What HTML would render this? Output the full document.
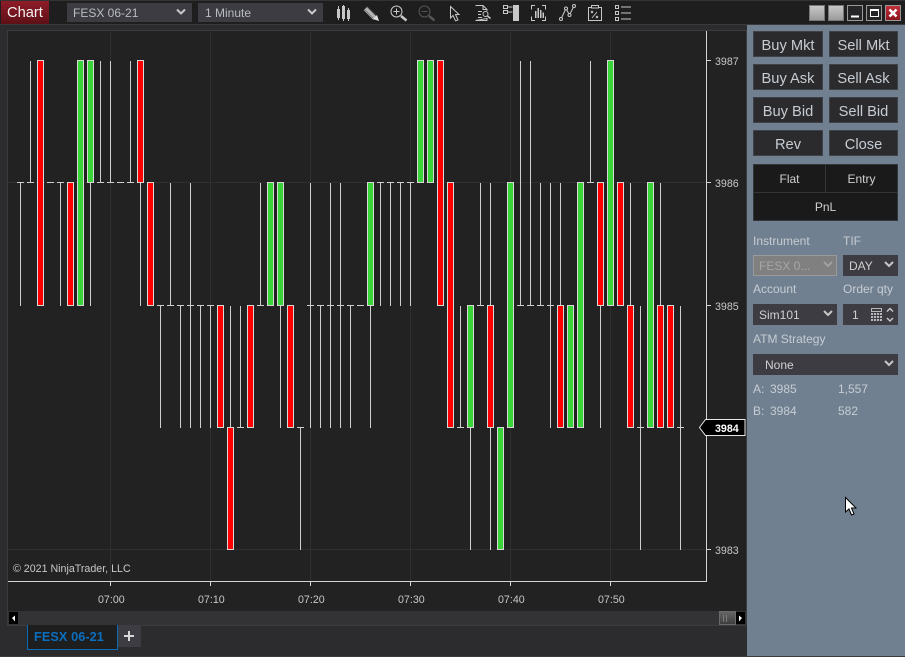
<!DOCTYPE html>
<html>
<head>
<meta charset="utf-8">
<style>
html,body{margin:0;padding:0;background:#2c2c2f;}
body{position:relative;width:905px;height:657px;overflow:hidden;font-family:"Liberation Sans",Arial,sans-serif;}
div{position:absolute;box-sizing:border-box;}
.t{white-space:nowrap;line-height:14px;height:14px;}
.ax{font-size:10.67px;color:#c8c8c8;}
.sel{background:#3c3c42;}
.btn{background:#2b2b2e;border:1px solid #3f4347;color:#c6ccd2;font-size:14.67px;text-align:center;line-height:28px;white-space:nowrap;}
.lb{font-size:12px;color:#c6ccd3;}
.dk{font-size:12px;color:#d0d0d0;text-align:center;line-height:14px;}
svg{position:absolute;left:0;top:0;}
</style>
</head>
<body>
<!-- title bar -->
<div style="left:0;top:0;width:905px;height:24px;background:#1e1e1f;border-top:1px solid #333;"></div>
<div style="left:0;top:24px;width:905px;height:1px;background:#3a3a3d;"></div>
<div style="left:1px;top:1px;width:48px;height:23px;background:linear-gradient(#8e1c28,#5e1016);"></div>
<div class="t" style="left:7px;top:5px;font-size:14.67px;color:#f2f2f2;line-height:16px;height:16px;">Chart</div>
<div class="sel" style="left:67px;top:3px;width:125px;height:19px;"></div>
<div class="t" style="left:73px;top:6px;font-size:12px;color:#b9bcc0;">FESX 06-21</div>
<div class="sel" style="left:198px;top:3px;width:125px;height:19px;"></div>
<div class="t" style="left:205px;top:6px;font-size:12px;color:#b9bcc0;">1 Minute</div>

<!-- chart frame -->
<div style="left:7px;top:30px;width:740px;height:596px;background:#222222;border:1px solid #3c3c3f;"></div>

<svg width="905" height="657" viewBox="0 0 905 657" shape-rendering="crispEdges">
 <!-- grid -->
 <path d="M110.5 32V581M210.5 32V581M310.5 32V581M410.5 32V581M510.5 32V581M610.5 32V581M8 182.5H706M8 549.5H706" stroke="#303030" fill="none"/>
 <!-- wicks and ticks -->
 <path stroke="#cfcfcf" fill="none" d="
 M20.5 183V306M17 182.5h7
 M30.5 61V183M27 182.5h7
 M47 182.5h7
 M60.5 183V306M57 182.5h7
 M90.5 183V306
 M100.5 61V183M97 182.5h7
 M110.5 61V183M107 182.5h7
 M117 182.5h7
 M130.5 61V183M127 182.5h7
 M140.5 183V306
 M160.5 306V428M157 305.5h7
 M170.5 183V306M167 305.5h7
 M180.5 306V428M177 305.5h7
 M190.5 183V428M187 305.5h7
 M200.5 306V428M197 305.5h7
 M210.5 306V428M207 305.5h7
 M230.5 306V428
 M240.5 306V428M237 427.5h7
 M260.5 183V306M257 305.5h7
 M280.5 306V428
 M300.5 428V550M297 427.5h7
 M310.5 183V428M307 305.5h7
 M320.5 306V428M317 305.5h7
 M330.5 183V428M327 305.5h7
 M340.5 183V428M337 305.5h7
 M350.5 306V428M347 305.5h7
 M357 305.5h7
 M370.5 306V428
 M380.5 183V306M377 182.5h7
 M390.5 183V306M387 182.5h7
 M400.5 183V306M397 182.5h7
 M410.5 183V306M407 182.5h7
 M460.5 306V428M457 427.5h7
 M470.5 428V550
 M480.5 183V306M477 305.5h7
 M490.5 183V306M490.5 428V550
 M520.5 61V306M517 305.5h7
 M530.5 61V306M527 305.5h7
 M540.5 183V306M537 305.5h7
 M550.5 183V428M547 305.5h7
 M560.5 183V306
 M590.5 61V183M587 182.5h7
 M600.5 306V428
 M630.5 183V306
 M640.5 306V550M637 427.5h7
 M660.5 183V306
 M680.5 306V550M677 427.5h7"/>
 <!-- red bodies -->
 <g fill="#ff0000" stroke="#d8d8d8">
  <rect x="37.5" y="60.5" width="6" height="245"/>
  <rect x="67.5" y="182.5" width="6" height="123"/>
  <rect x="137.5" y="60.5" width="6" height="122"/>
  <rect x="147.5" y="182.5" width="6" height="123"/>
  <rect x="217.5" y="305.5" width="6" height="122"/>
  <rect x="227.5" y="427.5" width="6" height="122"/>
  <rect x="247.5" y="305.5" width="6" height="122"/>
  <rect x="287.5" y="305.5" width="6" height="122"/>
  <rect x="437.5" y="60.5" width="6" height="245"/>
  <rect x="447.5" y="182.5" width="6" height="245"/>
  <rect x="487.5" y="305.5" width="6" height="122"/>
  <rect x="557.5" y="305.5" width="6" height="122"/>
  <rect x="597.5" y="182.5" width="6" height="123"/>
  <rect x="617.5" y="182.5" width="6" height="123"/>
  <rect x="627.5" y="305.5" width="6" height="122"/>
  <rect x="657.5" y="305.5" width="6" height="122"/>
  <rect x="667.5" y="305.5" width="6" height="122"/>
 </g>
 <!-- green bodies -->
 <g fill="#38d438" stroke="#d8d8d8">
  <rect x="77.5" y="60.5" width="6" height="245"/>
  <rect x="87.5" y="60.5" width="6" height="122"/>
  <rect x="267.5" y="182.5" width="6" height="123"/>
  <rect x="277.5" y="182.5" width="6" height="123"/>
  <rect x="367.5" y="182.5" width="6" height="123"/>
  <rect x="417.5" y="60.5" width="6" height="122"/>
  <rect x="427.5" y="60.5" width="6" height="122"/>
  <rect x="467.5" y="305.5" width="6" height="122"/>
  <rect x="497.5" y="427.5" width="6" height="122"/>
  <rect x="507.5" y="182.5" width="6" height="245"/>
  <rect x="567.5" y="305.5" width="6" height="122"/>
  <rect x="577.5" y="182.5" width="6" height="245"/>
  <rect x="607.5" y="60.5" width="6" height="245"/>
  <rect x="647.5" y="182.5" width="6" height="245"/>
 </g>
 <!-- axes -->
 <path stroke="#d4d4d4" fill="none" d="M706.5 31V582M8 581.5H707M707 60.5h4M707 182.5h4M707 305.5h4M707 549.5h4M110.5 582v4M210.5 582v4M310.5 582v4M410.5 582v4M510.5 582v4M610.5 582v4"/>
 <!-- scrollbar -->
 <rect x="8" y="611" width="738" height="14" fill="#333335"/>
 <rect x="9" y="612" width="9" height="12" fill="#000"/>
 <rect x="736" y="612" width="9" height="12" fill="#000"/>
</svg>

<svg width="905" height="657" viewBox="0 0 905 657">
 <path d="M12 618l3-2.500v6z" fill="#fff"/>
 <path d="M742 618l-3-2.500v6z" fill="#fff"/>
 <defs><linearGradient id="th" x1="0" y1="0" x2="0" y2="1"><stop offset="0" stop-color="#666"/><stop offset="1" stop-color="#3c3c3c"/></linearGradient>
 <linearGradient id="wb" x1="0" y1="0" x2="0" y2="1"><stop offset="0" stop-color="#c8c8c8"/><stop offset="1" stop-color="#9a9a9a"/></linearGradient>
 <linearGradient id="wr" x1="0" y1="0" x2="0" y2="1"><stop offset="0" stop-color="#c4303a"/><stop offset="1" stop-color="#8a141c"/></linearGradient></defs>
 <rect x="719.500" y="611.500" width="16" height="13" fill="url(#th)" stroke="#6a6a6a"/>
 <path d="M723.500 615v7M726.500 615v7" stroke="#7a7a7a"/>
 <!-- price marker -->
 <path d="M699.500 427.500L705.500 419.500H745V435.500H705.500Z" fill="#000" stroke="#e8e8e8"/>
 <!-- top dropdown chevrons -->
 <g fill="none" stroke="#c8c8c8" stroke-width="2">
  <path d="M177 9.500l4 4 4-4"/><path d="M308 9.500l4 4 4-4"/>
 </g>
 <!-- toolbar icons -->
 <g fill="#c8c8c8">
  <rect x="337" y="9" width="3" height="9"/><rect x="338" y="6" width="1" height="14"/>
  <rect x="342" y="6" width="3" height="13"/><rect x="343" y="5" width="1" height="16"/>
  <rect x="347" y="10" width="3" height="9"/><rect x="348" y="8" width="1" height="13"/>
 </g>
 <path d="M365.500 8.500L375 18" stroke="#b5b5b5" stroke-width="5" fill="none"/>
 <path d="M366.500 6.500L377 17M364 9L374.500 19.500" stroke="#666" stroke-width=".7" fill="none"/>
 <path d="M379 21l-6-2 4-4z" fill="#e0e0e0"/>
 <g fill="none" stroke="#c8c8c8">
  <circle cx="396.500" cy="11.500" r="5.500"/>
  <path d="M393.500 11.500h6M396.500 8.500v6"/>
  <path d="M401 16l5.500 4.500" stroke-width="2.500"/>
 </g>
 <g fill="none" stroke="#555">
  <circle cx="424.500" cy="11.500" r="5.500"/>
  <path d="M421.500 11.500h6"/>
  <path d="M429 16l5.500 4.500" stroke-width="2.500"/>
 </g>
 <path d="M450.500 6.500L459 14.500H455.500L458 20L455.500 20.800L453 15.500L450.500 18Z" fill="#1e1e1f" stroke="#c8c8c8"/>
 <g fill="none" stroke="#c8c8c8">
  <path d="M475.500 5.500H483L487 9.500V11M487 18.500V20.500H475.500Z"/>
  <path d="M483 5.500V9.500H487M478 11.500h4M478 14.500h3M478 17.500h4"/>
  <circle cx="485.500" cy="14" r="2.500"/>
  <path d="M487.500 16l3 2.500" stroke-width="1.500"/>
 </g>
 <g fill="none" stroke="#c8c8c8">
  <rect x="503.500" y="5.500" width="4" height="3"/><rect x="503.500" y="10.500" width="4" height="3"/>
  <path d="M507.500 7h5M507.500 12h5"/>
 </g>
 <rect x="513" y="5" width="6" height="16" fill="#c8c8c8"/>
 <g fill="none" stroke="#c8c8c8">
  <path d="M535 5.500h-3.500v4M542 5.500h3.500v4M535 20.500h-3.500v-4M542 20.500h3.500v-4"/>
 </g>
 <g fill="#c8c8c8"><rect x="535" y="11" width="1.500" height="7"/><rect x="537.500" y="8" width="1.500" height="10"/><rect x="540" y="10" width="1.500" height="8"/><rect x="542.500" y="12.500" width="1.500" height="5.500"/></g>
 <g fill="#1e1e1f" stroke="#c8c8c8">
  <path d="M561 19L566 8.500L569.500 15L574 6" fill="none"/>
  <circle cx="561" cy="19" r="1.500"/><circle cx="566" cy="8.500" r="1.500"/><circle cx="569.500" cy="15" r="1.500"/><circle cx="574" cy="6" r="1.500"/>
 </g>
 <g fill="none" stroke="#c8c8c8">
  <path d="M591 7.500h-2.500v13h13v-13H599"/>
  <rect x="591.500" y="5.500" width="7" height="2.500"/>
  <path d="M591 11l2 2M593 11l-2 2M596 16l2 2M598 16l-2 2M592 18l5-6" stroke-width=".9"/>
 </g>
 <g fill="none" stroke="#c8c8c8">
  <rect x="615.500" y="5.500" width="3" height="3"/><rect x="615.500" y="11.500" width="3" height="3"/><rect x="615.500" y="17.500" width="3" height="3"/>
  <path d="M621 7h10M621 13h10M621 19h10"/>
 </g>
 <!-- window controls -->
 <rect x="809.500" y="5.500" width="15" height="15" fill="url(#wb)" stroke="#777"/>
 <rect x="828.500" y="5.500" width="15" height="15" fill="url(#wb)" stroke="#777"/>
 <rect x="847.500" y="5.500" width="15" height="15" fill="#262628" stroke="#9a9a9a"/>
 <path d="M851 16.500h8" stroke="#fff" stroke-width="2"/>
 <rect x="866.500" y="5.500" width="15" height="15" fill="#262628" stroke="#9a9a9a"/>
 <rect x="870.500" y="9.500" width="8" height="7" fill="none" stroke="#fff"/><path d="M870 10h9" stroke="#fff" stroke-width="2"/>
 <rect x="885.500" y="5.500" width="15" height="15" fill="url(#wr)" stroke="#9a9a9a"/>
 <path d="M889.500 9.500l7 7M896.500 9.500l-7 7" stroke="#fff" stroke-width="2.500"/>
</svg>

<!-- axis labels -->
<div class="t ax" style="left:715px;top:55px;">3987</div>
<div class="t ax" style="left:715px;top:177px;">3986</div>
<div class="t ax" style="left:715px;top:300px;">3985</div>
<div class="t ax" style="left:715px;top:544px;">3983</div>
<div class="t" style="left:715px;top:422px;font-size:10.67px;font-weight:bold;color:#fff;">3984</div>
<div class="t ax" style="left:98px;top:593px;">07:00</div>
<div class="t ax" style="left:198px;top:593px;">07:10</div>
<div class="t ax" style="left:298px;top:593px;">07:20</div>
<div class="t ax" style="left:398px;top:593px;">07:30</div>
<div class="t ax" style="left:498px;top:593px;">07:40</div>
<div class="t ax" style="left:598px;top:593px;">07:50</div>
<div class="t ax" style="left:13px;top:562px;">© 2021 NinjaTrader, LLC</div>

<!-- bottom tab -->
<div style="left:27px;top:625px;width:91px;height:25px;background:#1e1e1f;border:1px solid #0a6ab4;border-top:none;"></div>
<div class="t" style="left:34px;top:630px;font-size:12.67px;font-weight:bold;color:#0b6fc0;letter-spacing:.1px;">FESX 06-21</div>
<div style="left:118px;top:625px;width:23px;height:22px;background:#3c3c42;"></div>
<div style="left:124px;top:635px;width:10px;height:2px;background:#d8d8d8;"></div>
<div style="left:128px;top:631px;width:2px;height:10px;background:#d8d8d8;"></div>

<!-- sidebar -->
<div style="left:747px;top:25px;width:158px;height:631px;background:#708090;"></div>
<div style="left:0;top:656px;width:905px;height:1px;background:#3c3c3f;"></div>

<div class="btn" style="left:753px;top:31px;width:70px;height:26px;">Buy Mkt</div>
<div class="btn" style="left:829px;top:31px;width:69px;height:26px;">Sell Mkt</div>
<div class="btn" style="left:753px;top:64px;width:70px;height:26px;">Buy Ask</div>
<div class="btn" style="left:829px;top:64px;width:69px;height:26px;">Sell Ask</div>
<div class="btn" style="left:753px;top:97px;width:70px;height:26px;">Buy Bid</div>
<div class="btn" style="left:829px;top:97px;width:69px;height:26px;">Sell Bid</div>
<div class="btn" style="left:753px;top:130px;width:70px;height:26px;">Rev</div>
<div class="btn" style="left:829px;top:130px;width:69px;height:26px;">Close</div>

<div style="left:753px;top:164px;width:145px;height:57px;background:#1a1a1b;border:1px solid #33363a;"></div>
<div style="left:825px;top:165px;width:1px;height:27px;background:#33363a;"></div>
<div style="left:754px;top:192px;width:143px;height:1px;background:#33363a;"></div>
<div class="dk" style="left:754px;top:172px;width:71px;">Flat</div>
<div class="dk" style="left:826px;top:172px;width:71px;">Entry</div>
<div class="dk" style="left:754px;top:200px;width:143px;">PnL</div>

<div class="t lb" style="left:753px;top:234px;">Instrument</div>
<div class="t lb" style="left:843px;top:234px;">TIF</div>
<div style="left:753px;top:255px;width:84px;height:21px;background:#808080;border:1px solid #9a9a9a;"></div>
<div class="t" style="left:759px;top:259px;font-size:12px;color:#a6a6a6;">FESX 0...</div>
<div class="sel" style="left:843px;top:255px;width:55px;height:21px;"></div>
<div class="t" style="left:849px;top:259px;font-size:12px;color:#d0d0d0;">DAY</div>

<div class="t lb" style="left:753px;top:282px;">Account</div>
<div class="t lb" style="left:843px;top:282px;">Order qty</div>
<div class="sel" style="left:753px;top:304px;width:84px;height:21px;"></div>
<div class="t" style="left:759px;top:308px;font-size:12px;color:#d0d0d0;">Sim101</div>
<div class="sel" style="left:843px;top:304px;width:55px;height:21px;"></div>
<div class="t" style="left:852px;top:308px;font-size:12px;color:#d0d0d0;">1</div>

<div class="t lb" style="left:753px;top:332px;">ATM Strategy</div>
<div class="sel" style="left:753px;top:354px;width:145px;height:21px;"></div>
<div class="t" style="left:765px;top:358px;font-size:12px;color:#d0d0d0;">None</div>

<div class="t lb" style="left:753px;top:382px;">A:</div>
<div class="t lb" style="left:770px;top:382px;">3985</div>
<div class="t lb" style="left:838px;top:382px;">1,557</div>
<div class="t lb" style="left:753px;top:404px;">B:</div>
<div class="t lb" style="left:770px;top:404px;">3984</div>
<div class="t lb" style="left:838px;top:404px;">582</div>

<!-- sidebar glyphs and mouse cursor -->
<svg width="905" height="657" viewBox="0 0 905 657">
 <path d="M824 262l4 4 4-4" fill="none" stroke="#a0a0a0" stroke-width="2"/>
 <g fill="none" stroke="#c8c8c8" stroke-width="2">
  <path d="M885 262l4 4 4-4"/><path d="M824 311l4 4 4-4"/><path d="M885 361l4 4 4-4"/>
 </g>
 <rect x="871" y="308" width="11" height="13" fill="#b8b8b8"/>
 <rect x="872" y="309" width="9" height="2" fill="#3c3c42"/>
 <path d="M871 312.500h11M871 315.500h11M871 318.500h11M873.500 312v9M876.500 312v9M879.500 312v9" stroke="#3c3c42" stroke-width=".9"/>
 <path d="M887 311.500l3-3 3 3M887 318l3 3 3-3" fill="none" stroke="#c8c8c8" stroke-width="1.500"/>
 <path d="M845.500 497.500V512L849 509L851.500 515L854 514L851.500 508H856Z" fill="#fff" stroke="#000"/>
</svg>
</body>
</html>
